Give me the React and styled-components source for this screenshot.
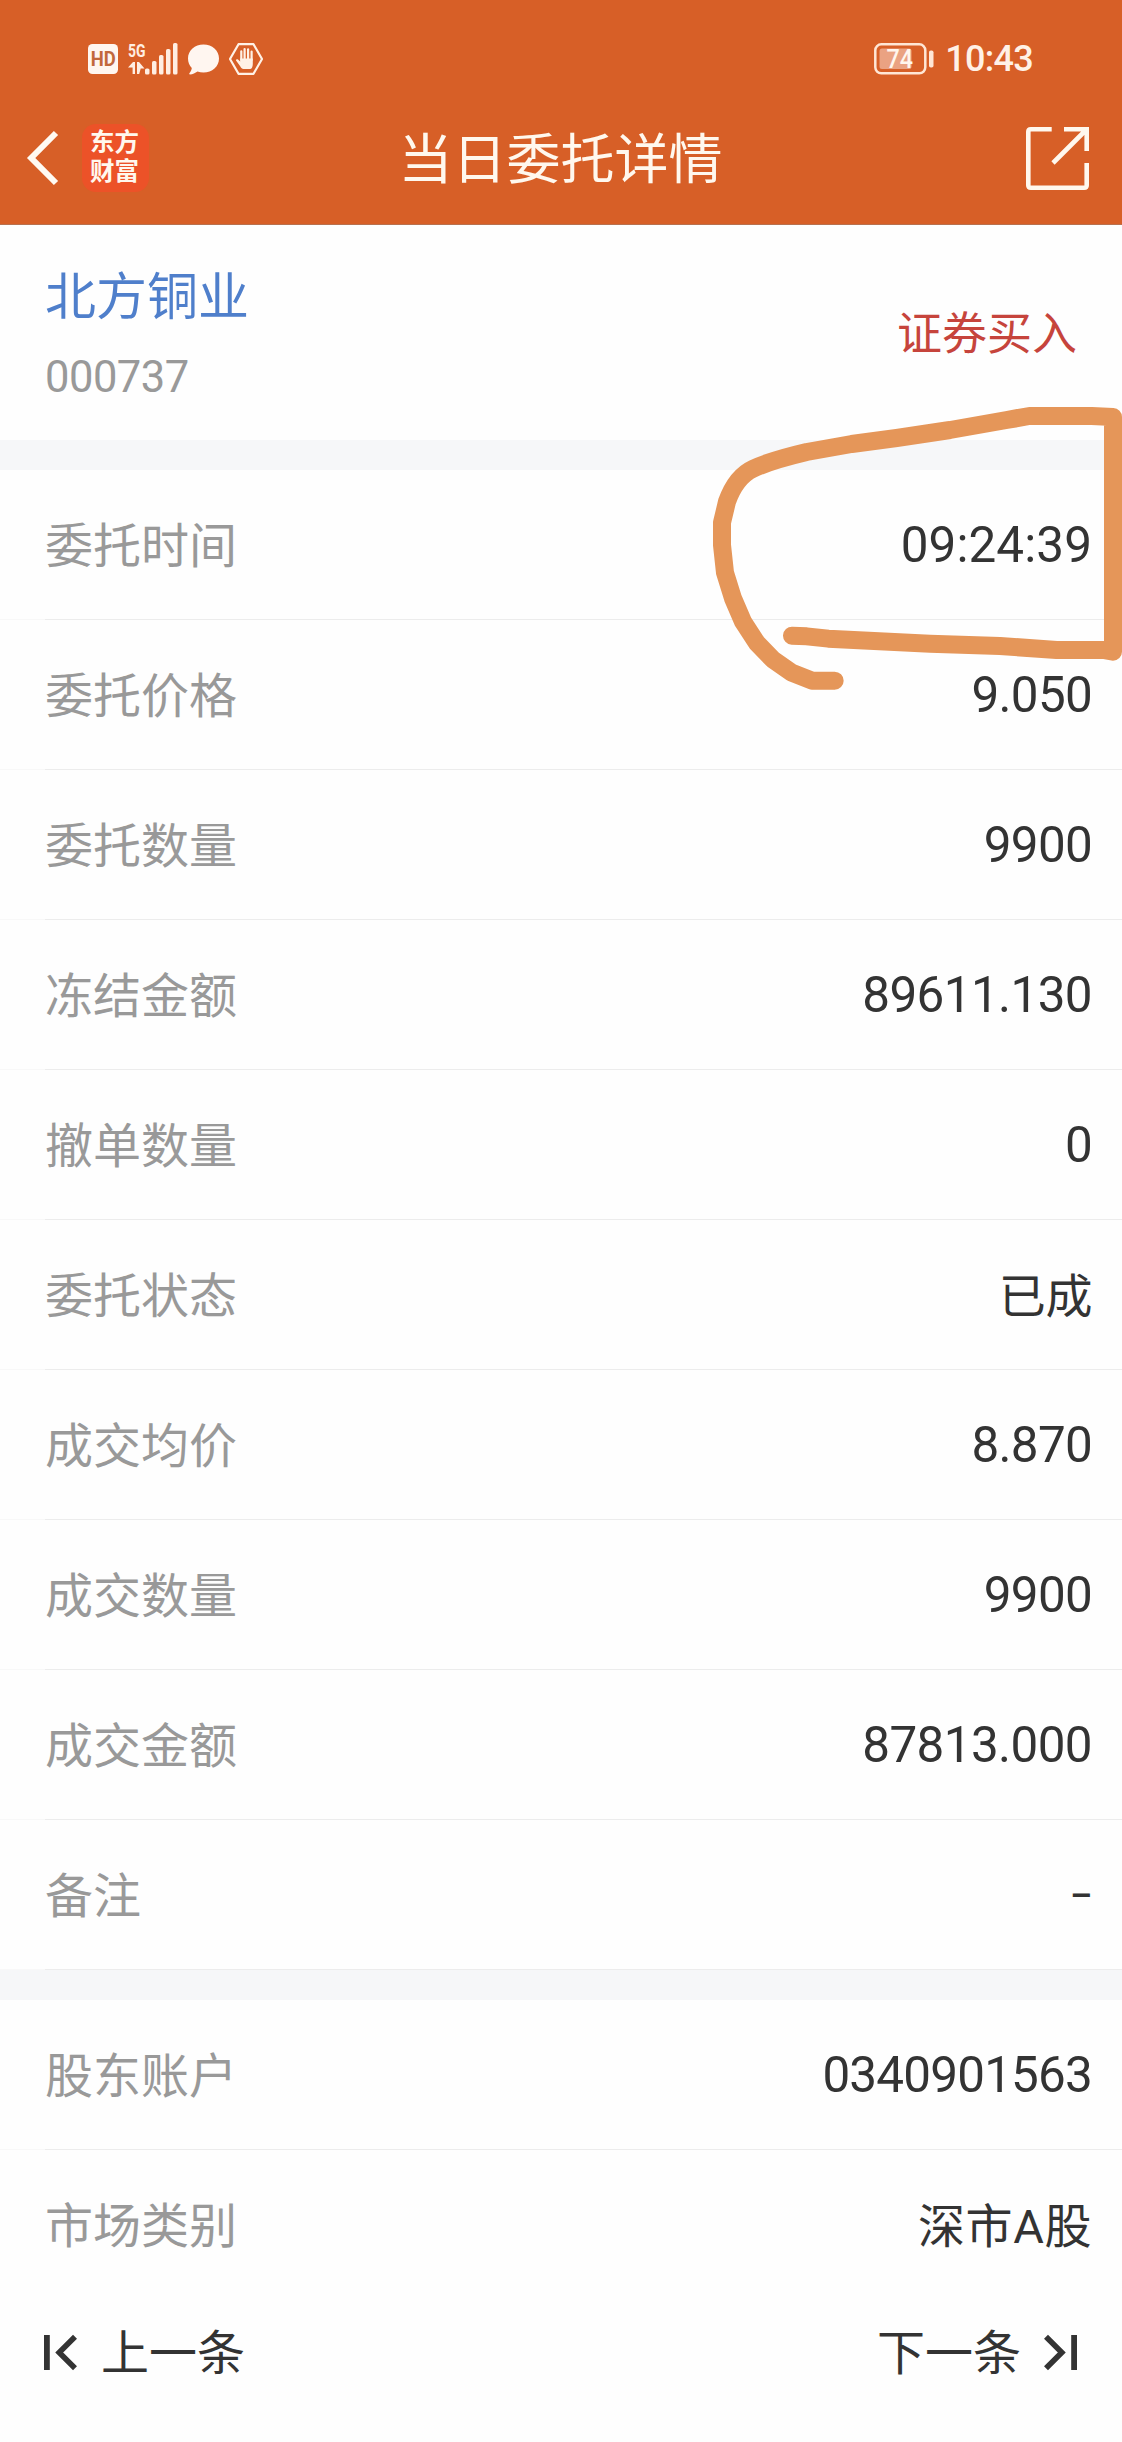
import React from "react";
import styled, { createGlobalStyle } from "styled-components";

const GlobalStyle = createGlobalStyle`
  * { box-sizing: border-box; }
  body {
    margin: 0;
    background: #fefefe;
    font-family: Roboto, "Noto Sans CJK SC", sans-serif;
    color: #333333;
  }
  svg { display: block; flex: none; overflow: visible; }
`;

const Screen = styled.div`
  position: relative;
  width: 1122px;
  height: 2442px;
  overflow: hidden;
  display: flex;
  flex-direction: column;
  background: #fefefe;
`;

const Header = styled.header`
  flex: none;
  height: 225px;
  background: #d75f27;
  border-bottom: 1px solid #b8714f;
  color: #fff8ee;
`;

const StatusBar = styled.div`
  height: 118px;
  padding: 0 89px 0 88px;
  display: flex;
  align-items: center;
  justify-content: space-between;
`;

const StatusGroup = styled.div`
  display: flex;
  align-items: center;
  gap: ${(p) => p.$gap}px;
`;

const Clock = styled.span`
  font-size: 36px;
  line-height: 42px;
  font-weight: 500;
  letter-spacing: -0.7px;
  color: #fff1e6;
`;

const NavBar = styled.div`
  height: 80px;
  padding: 0 33px 0 27px;
  display: grid;
  grid-template-columns: 1fr auto 1fr;
  align-items: center;
`;

const NavLeft = styled.div`
  display: flex;
  align-items: center;
  gap: 24px;
`;

const NavRight = styled.div`
  display: flex;
  justify-content: flex-end;
`;

const Logo = styled.div`
  width: 67px;
  height: 68px;
  border-radius: 14px;
  background: #ec5228;
  padding: 2px 2px 0 0;
  display: flex;
  flex-direction: column;
  align-items: center;
  font-family: "Noto Sans CJK SC", sans-serif;
  font-size: 24.5px;
  line-height: 29px;
  font-weight: 700;
`;

const Title = styled.h1`
  margin: 0;
  padding: 6px 0 0 5px;
  font-size: 54px;
  line-height: 74px;
  font-weight: 400;
`;

const Stock = styled.section`
  flex: none;
  height: 215px;
  padding: 0 45px;
  display: flex;
  align-items: center;
  justify-content: space-between;
`;

const StockInfo = styled.div`
  padding-top: 4px;
  display: flex;
  flex-direction: column;
  gap: 14px;
`;

const StockName = styled.div`
  font-size: 51px;
  line-height: 72px;
  color: #4f7fcb;
`;

const StockCode = styled.div`
  font-size: 43.5px;
  line-height: 60px;
  letter-spacing: -0.5px;
  color: #999999;
`;

const Side = styled.div`
  padding-top: 4px;
  font-size: 45px;
  line-height: 60px;
  color: #c6443c;
`;

const Divider = styled.div`
  flex: none;
  height: 30px;
  background: #f6f7f9;
`;

const Row = styled.div`
  flex: none;
  height: 150px;
  padding: 3px 30px 0 45px;
  display: flex;
  align-items: center;
  justify-content: space-between;
  background: ${(p) =>
    p.$last
      ? "none"
      : "linear-gradient(to right, #f8f8f8 45px, #ececec 45px) bottom / 100% 1px no-repeat"};
`;

const Label = styled.span`
  font-size: 48px;
  line-height: 72px;
  color: #999999;
`;

const Value = styled.span`
  padding-bottom: ${(p) => (p.$text ? 0 : 3)}px;
  font-size: ${(p) => (p.$text ? 47 : 49.4)}px;
  line-height: 72px;
  letter-spacing: ${(p) => p.$spacing ?? -0.7}px;
`;

const Dash = styled.span`
  padding-bottom: 3px;
  font-size: 34px;
  line-height: 72px;
  font-weight: 600;
`;

const Footer = styled.footer`
  flex: none;
  height: 104px;
  padding: 0 45px 0 44px;
  display: flex;
  align-items: center;
  justify-content: space-between;
`;

const PageLink = styled.div`
  display: flex;
  align-items: center;
  gap: ${(p) => p.$gap}px;
  font-size: 48px;
  line-height: 72px;
`;

const PageText = styled.span`
  padding-top: 3px;
`;

const Scribble = styled.svg`
  position: absolute;
  left: 690px;
  top: 280px;
  pointer-events: none;
`;

const HdIcon = () => (
  <svg width="30" height="30" viewBox="0 0 30 30">
    <rect width="30" height="30" rx="4.5" fill="#fff6f0" />
    <text x="2.8" y="22" fontFamily="Roboto, sans-serif" fontWeight="700" fontSize="20"
      textLength="25" lengthAdjust="spacingAndGlyphs" fill="#c2673c">HD</text>
  </svg>
);

const SignalIcon = () => (
  <svg width="50" height="32" viewBox="0 0 50 32" fill="#ffeee2">
    <text x="0" y="14" fontFamily="Roboto, sans-serif" fontWeight="700" fontSize="18.5"
      textLength="17.5" lengthAdjust="spacingAndGlyphs">5G</text>
    <path d="M0 24.5 5 19h2v12H4.6v-6.5zM9 19h2l5.5 6.5h-3.8L11.2 31H9z" />
    <rect x="17" y="25.5" width="4.5" height="6" rx="1.6" />
    <rect x="24" y="18" width="4.5" height="13.5" rx="1.6" />
    <rect x="31" y="12" width="4.5" height="19.5" rx="1.6" />
    <rect x="38" y="6" width="4.5" height="25.5" rx="1.6" />
    <rect x="45" y="0" width="4.5" height="31.5" rx="1.6" />
  </svg>
);

const BubbleIcon = () => (
  <svg width="31" height="31" viewBox="0 0 31 31" fill="#fff6f0">
    <path d="M15.5 0.5C24.2 0.5 31 6.500 31 14.500S24.200 28.500 15.500 28.500c-2.200 0-4.200-.3-6-1-2.200 1.600-4.800 2.700-7.500 3-.8 0-1-.6-.6-1.200 1.400-1.600 2.100-3.400 2.400-5.300C1.400 21.500 0 18.200 0 14.500 0 6.500 6.800.5 15.500.5z" />
  </svg>
);

const HandIcon = () => (
  <svg width="34" height="32" viewBox="0 0 34 32" fill="none">
    <path d="M9.500 1.200h15L33 16l-8.500 14.800h-15L1 16z" stroke="#fff1e6" strokeWidth="2.200" strokeLinejoin="round" />
    <path d="M12.300 17V8.300M15.600 16V6M19.100 16V6.300M22.600 17V8.600" stroke="#fff1e6" strokeWidth="2.200" strokeLinecap="round" />
    <path d="M11.200 15.500h12.600v5.500c0 3-1.200 5-2.800 5h-6.500c-1.500 0-2.300-1-3.300-2.700l-4-5.600c-.7-1.100.8-2 1.800-1.200l2.200 2z" fill="#fff1e6" />
  </svg>
);

const BatteryIcon = () => (
  <svg width="60" height="32" viewBox="0 0 60 32">
    <rect x="1.300" y="1.300" width="50" height="29" rx="6" fill="none" stroke="#ffe6d5" strokeWidth="2.500" />
    <rect x="5.500" y="5.500" width="32" height="20.500" rx="2.500" fill="#eaa282" />
    <rect x="55" y="7.500" width="4.500" height="17" rx="1.800" fill="#ffe6d5" />
    <text x="12.500" y="25.300" fontFamily="Roboto, sans-serif" fontWeight="500" fontSize="25.500"
      textLength="26.500" lengthAdjust="spacingAndGlyphs" fill="#fff6ee">74</text>
  </svg>
);

const BackIcon = () => (
  <svg width="31" height="54" viewBox="0 0 31 54" fill="none" stroke="#fffaf2" strokeWidth="6">
    <path d="M29 2 4.200 27 29 52" />
  </svg>
);

const ShareIcon = () => (
  <svg width="63" height="63" viewBox="0 0 63 63" fill="none" stroke="#fff8ee" strokeWidth="4.600">
    <path d="M25.700 2.300H4.800Q2.300 2.300 2.300 4.800V58.200Q2.300 60.700 4.800 60.700H58.200Q60.700 60.700 60.700 58.200V36" />
    <path d="M38 2.300H60.700V24M60 3 27 36" />
  </svg>
);

const StepIcon = ({ next }) => (
  <svg width="33" height="35" viewBox="0 0 33 35" fill="none" stroke="#333333">
    <g transform={next ? "matrix(-1 0 0 1 33 0)" : undefined}>
      <path d="M2.900 0V35" strokeWidth="5.800" />
      <path d="M31 1.700 15.200 17.500 31 33.300" strokeWidth="5.600" />
    </g>
  </svg>
);

const orderRows = [
  { label: "委托时间", value: "09:24:39", spacing: 0.1 },
  { label: "委托价格", value: "9.050" },
  { label: "委托数量", value: "9900" },
  { label: "冻结金额", value: "89611.130", spacing: -0.6 },
  { label: "撤单数量", value: "0" },
  { label: "委托状态", value: "已成", text: true, spacing: -0.4 },
  { label: "成交均价", value: "8.870" },
  { label: "成交数量", value: "9900" },
  { label: "成交金额", value: "87813.000", spacing: -0.6 },
  { label: "备注", dash: true },
];

const accountRows = [
  { label: "股东账户", value: "0340901563", spacing: -0.8 },
  { label: "市场类别", value: "深市A股", text: true, spacing: 0.6, last: true },
];

const DetailRow = ({ label, value, text, last, spacing, dash }) => (
  <Row $last={last}>
    <Label>{label}</Label>
    {dash ? <Dash>–</Dash> : <Value $text={text} $spacing={spacing}>{value}</Value>}
  </Row>
);

export default function App() {
  return (
    <Screen>
      <GlobalStyle />
      <Header>
        <StatusBar>
          <StatusGroup $gap={10}>
            <HdIcon />
            <SignalIcon />
            <BubbleIcon />
            <HandIcon />
          </StatusGroup>
          <StatusGroup $gap={11}>
            <BatteryIcon />
            <Clock>10:43</Clock>
          </StatusGroup>
        </StatusBar>
        <NavBar>
          <NavLeft>
            <BackIcon />
            <Logo>
              <span>东方</span>
              <span>财富</span>
            </Logo>
          </NavLeft>
          <Title>当日委托详情</Title>
          <NavRight>
            <ShareIcon />
          </NavRight>
        </NavBar>
      </Header>

      <Stock>
        <StockInfo>
          <StockName>北方铜业</StockName>
          <StockCode>000737</StockCode>
        </StockInfo>
        <Side>证券买入</Side>
      </Stock>
      <Divider />
      {orderRows.map((r) => <DetailRow key={r.label} {...r} />)}
      <Divider />
      {accountRows.map((r) => <DetailRow key={r.label} {...r} />)}

      <Footer>
        <PageLink $gap={24}>
          <StepIcon />
          <PageText>上一条</PageText>
        </PageLink>
        <PageLink $gap={23}>
          <PageText>下一条</PageText>
          <StepIcon next />
        </PageLink>
      </Footer>

      <Scribble width="432" height="450" viewBox="0 0 1296 1350" fill="none" stroke="#e59659"
        strokeWidth="54" strokeLinecap="round" strokeLinejoin="round">
        <path d="M434 1202H366L305 1178 248 1138 200 1088 159 1025 129 955 105 878 96 795V728L111 665Q138 590 190 566 240 542 350 516L485 492 620 474 780 450 950 420 1018 408H1205L1269 411V1115L1240 1110H1100L930 1098 720 1091 415 1076 350 1069 306 1067" />
      </Scribble>
    </Screen>
  );
}
